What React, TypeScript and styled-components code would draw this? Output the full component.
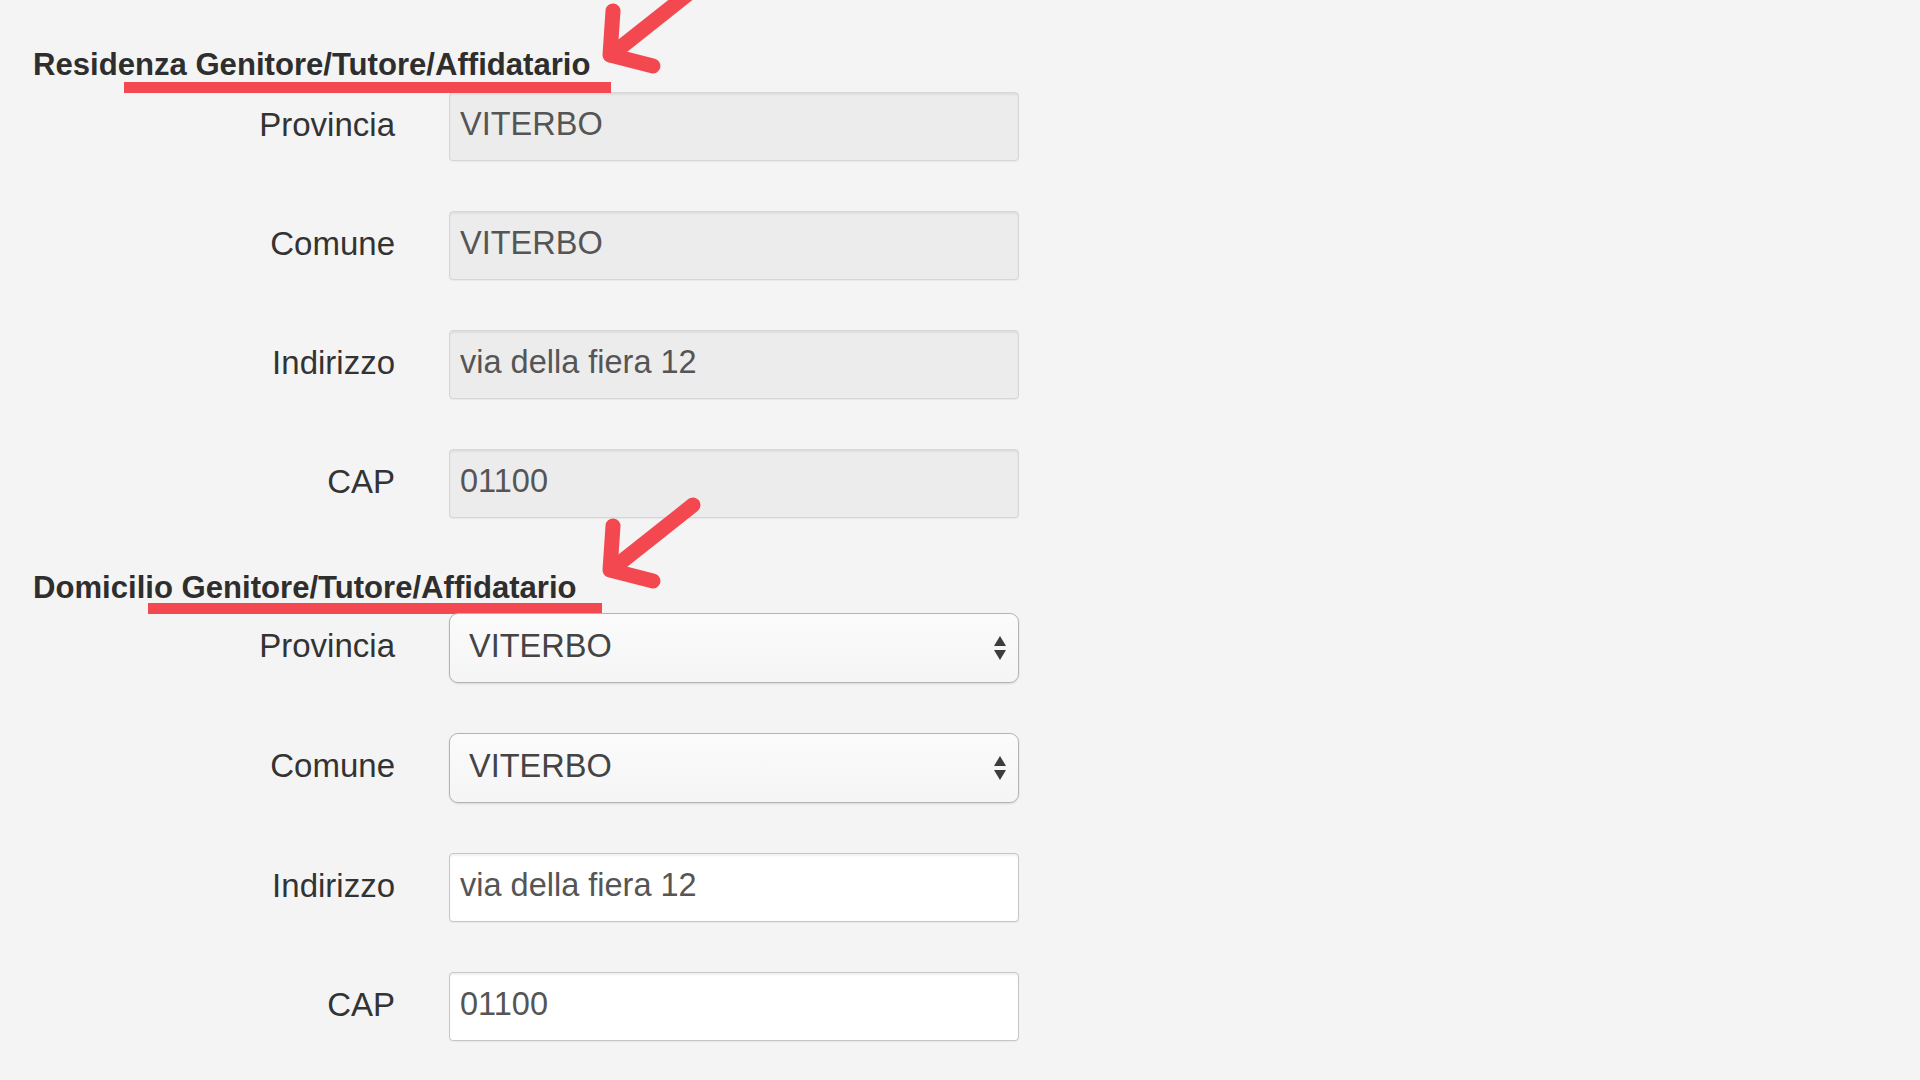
import React from "react";
import styled, { createGlobalStyle } from "styled-components";

const GlobalStyle = createGlobalStyle`
  html, body {
    margin: 0;
    padding: 0;
    background: #f4f4f4;
    overflow: hidden;
  }
  body {
    font-family: "Liberation Sans", Arial, Helvetica, sans-serif;
    color: #333;
  }
`;

const Page = styled.div`
  display: flex;
  flex-direction: column;
  gap: 52px;
  padding: 47px 0 0 33px;
  width: 1920px;
  height: 1080px;
  box-sizing: border-box;
`;

const Section = styled.section`
  display: flex;
  flex-direction: column;
`;

const Heading = styled.h3<{ $gap: number }>`
  position: relative;
  margin: 0 0 ${(p) => p.$gap}px 0;
  font-size: 31.1px;
  line-height: 36px;
  font-weight: 700;
  color: #2e2e2e;
  white-space: nowrap;
`;

const Underline = styled.span<{ $left: number; $top: number; $width: number }>`
  position: absolute;
  left: ${(p) => p.$left}px;
  top: ${(p) => p.$top}px;
  width: ${(p) => p.$width}px;
  height: 11px;
  background: #f3484f;
`;

const ArrowMark = styled.svg<{ $left: number; $top: number }>`
  position: absolute;
  left: ${(p) => p.$left}px;
  top: ${(p) => p.$top}px;
  width: 120px;
  height: 95px;
  overflow: visible;
`;

const Rows = styled.div`
  display: flex;
  flex-direction: column;
  gap: 50px;
`;

const Row = styled.div`
  display: grid;
  grid-template-columns: 362px 570px;
  column-gap: 54px;
  align-items: center;
`;

const Label = styled.label`
  text-align: right;
  font-size: 33px;
  line-height: 40px;
  color: #333;
  padding-bottom: 4px;
`;

const TextField = styled.input<{ $readonly?: boolean }>`
  box-sizing: border-box;
  width: 570px;
  height: 69px;
  margin: 0;
  padding: 0 10px 5px 10px;
  font-family: "Liberation Sans", Arial, Helvetica, sans-serif;
  font-size: 32.5px;
  color: #555;
  background: ${(p) => (p.$readonly ? "#ececec" : "#ffffff")};
  border: 1px solid ${(p) => (p.$readonly ? "#d6d6d6" : "#c6c6c6")};
  border-radius: 4px;
  box-shadow: inset 0 2px 2px rgba(0, 0, 0, 0.06), 0 1px 1px rgba(0, 0, 0, 0.05);
  outline: none;
`;

const SelectWrap = styled.div`
  position: relative;
  width: 570px;
  height: 70px;
`;

const Select = styled.select`
  box-sizing: border-box;
  width: 100%;
  height: 100%;
  margin: 0;
  padding: 0 50px 5px 19px;
  appearance: none;
  -webkit-appearance: none;
  font-family: "Liberation Sans", Arial, Helvetica, sans-serif;
  font-size: 32.5px;
  color: #444;
  background: linear-gradient(#fbfbfb, #f5f5f5);
  border: 1.5px solid #b4b4b4;
  border-radius: 9px;
  box-shadow: 0 1px 2px rgba(0, 0, 0, 0.12);
  outline: none;
`;

const SelectArrows = styled.svg`
  position: absolute;
  right: 12px;
  top: 50%;
  width: 14px;
  height: 28px;
  margin-top: -14px;
  pointer-events: none;
`;

type Field = { label: string; value: string };

const fields: Field[] = [
  { label: "Provincia", value: "VITERBO" },
  { label: "Comune", value: "VITERBO" },
  { label: "Indirizzo", value: "via della fiera 12" },
  { label: "CAP", value: "01100" },
];

function Arrow({ left, top }: { left: number; top: number }) {
  return (
    <ArrowMark $left={left} $top={top} viewBox="0 0 120 95">
      <g stroke="#f3484f" strokeWidth="15" strokeLinecap="round" strokeLinejoin="round" fill="none">
        <path d="M100 5 L18 70" />
        <path d="M20 26 L17 70 L60 81" />
      </g>
    </ArrowMark>
  );
}

function SelectField({ value }: { value: string }) {
  return (
    <SelectWrap>
      <Select defaultValue={value}>
        <option value={value}>{value}</option>
      </Select>
      <SelectArrows viewBox="0 0 14 28">
        <path d="M7 2 L13 12 L1 12 Z" fill="#3d3d3d" />
        <path d="M1 16 L13 16 L7 26 Z" fill="#3d3d3d" />
      </SelectArrows>
    </SelectWrap>
  );
}

export default function App() {
  return (
    <>
      <GlobalStyle />
      <Page>
        <Section>
          <Heading $gap={9}>
            Residenza Genitore/Tutore/Affidatario
            <Underline $left={91} $top={35} $width={487} />
            <Arrow left={560} top={-62} />
          </Heading>
          <Rows>
            {fields.map((f) => (
              <Row key={"r" + f.label}>
                <Label>{f.label}</Label>
                <TextField $readonly readOnly defaultValue={f.value} />
              </Row>
            ))}
          </Rows>
        </Section>
        <Section>
          <Heading $gap={7}>
            Domicilio Genitore/Tutore/Affidatario
            <Underline $left={115} $top={33} $width={454} />
            <Arrow left={560} top={-70} />
          </Heading>
          <Rows>
            {fields.map((f, i) => (
              <Row key={"d" + f.label}>
                <Label>{f.label}</Label>
                {i < 2 ? <SelectField value={f.value} /> : <TextField defaultValue={f.value} />}
              </Row>
            ))}
          </Rows>
        </Section>
      </Page>
    </>
  );
}
